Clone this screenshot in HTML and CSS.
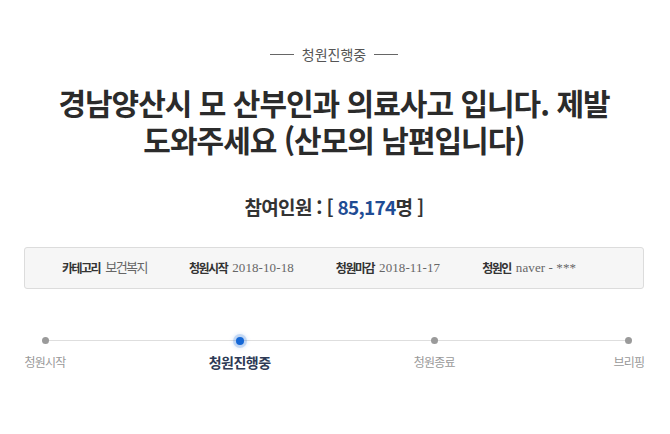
FILE: index.html
```html
<!DOCTYPE html>
<html lang="ko">
<head>
<meta charset="utf-8">
<title>청원진행중</title>
<link rel="stylesheet" href="styles.css">
</head>
<body>
<main class="petition">
  <div class="status-tag"><span class="rule"></span><span class="status-text">청원진행중</span><span class="rule"></span></div>
  <h1 class="petition-title">경남양산시 모 산부인과 의료사고 입니다. 제발<br>도와주세요 (산모의 남편입니다)</h1>
  <p class="count">참여인원 : [ <span class="count-num">85,174</span>명 ]</p>
  <ul class="info">
    <li class="info-item"><span class="info-label">카테고리</span><span class="info-value info-value-ko">보건복지</span></li>
    <li class="info-item"><span class="info-label">청원시작</span><span class="info-value">2018-10-18</span></li>
    <li class="info-item"><span class="info-label">청원마감</span><span class="info-value">2018-11-17</span></li>
    <li class="info-item"><span class="info-label">청원인</span><span class="info-value">naver - ***</span></li>
  </ul>
  <ol class="steps">
    <li class="step"><span class="dot"></span><span class="step-label">청원시작</span></li>
    <li class="step step-current"><span class="dot"></span><span class="step-label">청원진행중</span></li>
    <li class="step"><span class="dot"></span><span class="step-label">청원종료</span></li>
    <li class="step"><span class="dot"></span><span class="step-label">브리핑</span></li>
  </ol>
</main>
</body>
</html>
```

FILE: styles.css
```css
* {
  box-sizing: border-box;
}

html,
body {
  margin: 0;
  padding: 0;
  background: #fff;
}

body {
  font-family: "Noto Sans CJK KR", "Noto Sans", sans-serif;
  color: #333;
}

.petition {
  width: 670px;
  padding: 44px 26px 0 24px;
  display: flex;
  flex-direction: column;
  align-items: stretch;
}

/* status tag with short rules on each side */
.status-tag {
  display: flex;
  align-items: center;
  justify-content: center;
  gap: 8px;
  height: 20px;
  color: #555;
  font-size: 14px;
}

.rule {
  width: 24px;
  height: 1px;
  background: #666;
}

.petition-title {
  margin: 20px 0 0;
  text-align: center;
  font-size: 30px;
  line-height: 37px;
  font-weight: 700;
  letter-spacing: -1px;
  color: #2b2b2b;
}

.count {
  margin: 36px 0 0;
  text-align: center;
  font-size: 19px;
  line-height: 26px;
  font-weight: 700;
  letter-spacing: -0.7px;
  color: #333;
}

.count-num {
  color: #1f4c94;
}

/* summary box */
.info {
  list-style: none;
  margin: 27px 0 0;
  padding: 0 0 0 37px;
  height: 42px;
  display: flex;
  align-items: center;
  gap: 42px;
  background: #f6f6f6;
  border: 1px solid #dcdcdc;
  border-radius: 3px;
}

.info-item {
  display: flex;
  align-items: center;
  gap: 5px;
  font-size: 12px;
  line-height: 16px;
}

.info-label {
  font-weight: 700;
  color: #333;
  letter-spacing: -1.5px;
}

.info-value {
  font-family: "Liberation Serif", "Noto Sans CJK KR", serif;
  font-size: 13px;
  color: #666;
  letter-spacing: 0.1px;
}

.info-value-ko {
  letter-spacing: -1.5px;
}

/* progress steps */
.steps {
  list-style: none;
  margin: 48px 0 0;
  padding: 0;
  margin-left: 1px;
  width: 624px;
  display: flex;
  justify-content: space-between;
  position: relative;
}

.steps::before {
  content: "";
  position: absolute;
  left: 20px;
  right: 20px;
  top: 3px;
  height: 1px;
  background: #dedede;
}

.step {
  width: 40px;
  display: flex;
  flex-direction: column;
  align-items: center;
  position: relative;
}

.dot {
  width: 7px;
  height: 7px;
  border-radius: 50%;
  background: #9a9a9a;
}

.step-label {
  margin-top: 10px;
  white-space: nowrap;
  font-size: 12px;
  line-height: 16px;
  color: #999;
  letter-spacing: -0.8px;
}

.step-current .dot {
  width: 8px;
  height: 8px;
  margin-top: -0.5px;
  background: #1467d6;
  box-shadow: 0 0 0 3px rgba(20, 103, 214, 0.18), 0 0 4px 3px rgba(20, 103, 214, 0.15);
}

.step-current .step-label {
  margin-top: 9px;
  font-size: 14px;
  font-weight: 700;
  color: #2d3a55;
  letter-spacing: -0.5px;
}
```
